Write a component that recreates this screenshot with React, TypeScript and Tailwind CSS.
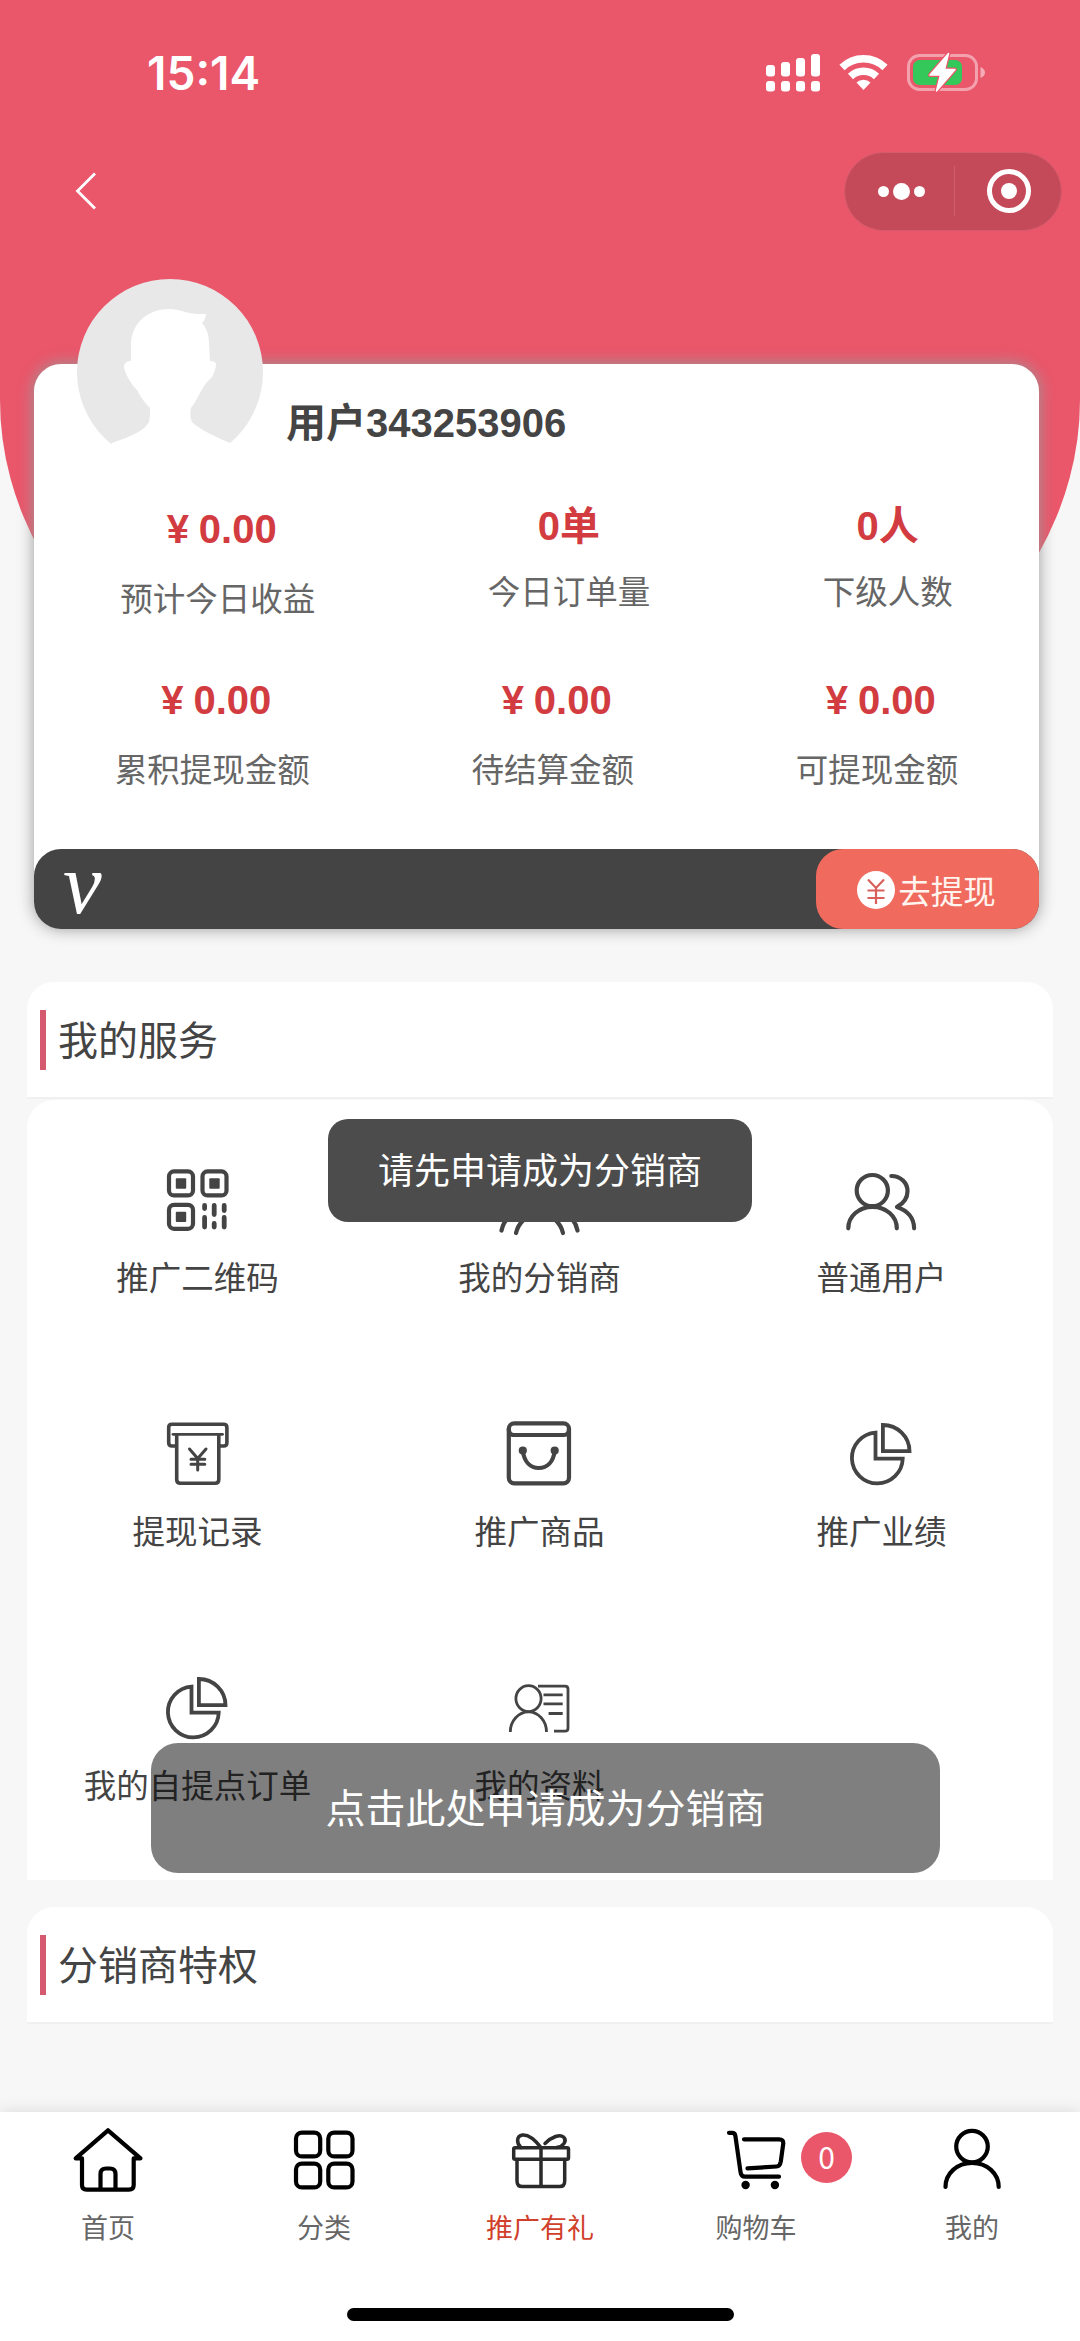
import { ReactNode } from 'react';

interface StatProps {
  label: string;
  value: string;
  money?: boolean;
}

interface ServiceItem {
  label: string;
  icon: ReactNode;
}

interface TabItem {
  label: string;
  icon: ReactNode;
  active?: boolean;
  badge?: number;
}

const Icon = ({ children, width = 4.2 }: { children: ReactNode; width?: number }) => (
  <svg
    viewBox="0 0 72 72"
    className="block w-[72px] h-[72px] overflow-visible"
    fill="none"
    stroke="currentColor"
    strokeWidth={width}
    strokeLinecap="round"
    strokeLinejoin="round"
  >
    {children}
  </svg>
);

const PieIcon = () => (
  <Icon width={3.8}>
    <g strokeLinejoin="miter">
      <path d="M29.5 14.6V40.7H56.7A25.4 25.4 0 1 1 29.5 14.6Z" />
      <path d="M36.9 7V33.2H63.5A26.6 26.4 0 0 0 36.9 7Z" />
    </g>
  </Icon>
);

const services: ServiceItem[] = [
  {
    label: '推广二维码',
    icon: (
      <Icon>
        <rect x="7" y="7.4" width="24" height="24" rx="5" />
        <rect x="40.5" y="7.4" width="24" height="24" rx="5" />
        <rect x="7" y="40.8" width="24" height="24" rx="5" />
        <g fill="currentColor" stroke="none">
          <rect x="13.8" y="14.3" width="10.4" height="10.4" rx="1" />
          <rect x="47.3" y="14.3" width="10.4" height="10.4" rx="1" />
          <rect x="13.8" y="47.7" width="10.4" height="10.4" rx="1" />
        </g>
        <path
          strokeWidth="4.8"
          d="M42.6 41.4V44.6M42.6 53.5V63M52.2 41.4V50.6M52.2 59.5V63M62.2 41.4V46.6M62.2 53.5V63"
        />
      </Icon>
    ),
  },
  {
    label: '我的分销商',
    icon: (
      <Icon>
        <circle cx="35.5" cy="30" r="16" />
        <path d="M12 69C14 60 23 49 35.5 49S57 60 59 69" />
        <path d="M-2.5 66.5C-1 59 4 52 12 49M73.5 66.5C72 59 67 52 59 49" />
      </Icon>
    ),
  },
  {
    label: '普通用户',
    icon: (
      <Icon>
        <circle cx="26.3" cy="26.6" r="15.6" />
        <path d="M2.3 64.3C2.3 52 13 42.9 26.5 42.9S50.8 52 50.8 64.3" />
        <path d="M45.3 12C55 12 61.5 19 61.5 27.2C61.5 34 57 39.7 51 42.9C61.5 46.5 68.1 54 68.1 64.3" />
      </Icon>
    ),
  },
  {
    label: '提现记录',
    icon: (
      <Icon width={3.6}>
        <path d="M13.5 28H10Q6.7 28 6.7 24.7V9.5Q6.7 6.3 10 6.3H61.6Q64.9 6.3 64.9 9.5V24.7Q64.9 28 61.6 28H58" />
        <path d="M11 16.3H60.5" strokeWidth="2.8" />
        <path d="M14.7 17V61.5Q14.7 65.3 18.5 65.3H53Q56.8 65.3 56.8 61.5V17" />
        <path strokeWidth="3" d="M27.5 31L35.7 40.5L44 31M35.7 40.5V52M29 41.3H42.8M29 46.2H42.8" />
      </Icon>
    ),
  },
  {
    label: '推广商品',
    icon: (
      <Icon>
        <rect x="4.8" y="5.3" width="60.2" height="60" rx="5.5" />
        <path d="M4.8 11Q4.8 17 10 17H60Q65 17 65 11" />
        <path d="M18.8 33C20.3 44 26.5 50 34.8 50S49.3 44 50.7 33" />
        <circle cx="18.8" cy="32.5" r="2" />
        <circle cx="50.7" cy="32.5" r="2" />
      </Icon>
    ),
  },
  { label: '推广业绩', icon: <PieIcon /> },
  { label: '我的自提点订单', icon: <PieIcon /> },
  {
    label: '我的资料',
    icon: (
      <Icon width={2.8}>
        <g strokeLinecap="butt">
          <ellipse cx="24.5" cy="26.6" rx="12.6" ry="13" />
          <path d="M6.3 60C6.3 49 14.5 39.8 24.5 39.8S42.5 49 42.5 60" />
          <path d="M34 14.2H61Q64 14.2 64 17.2V56.2Q64 59.2 61 59.2H50" />
          <path d="M39.5 22.8H58.7M39.5 31.8H58.7M44.6 41.5H58.7" />
        </g>
      </Icon>
    ),
  },
];

const tabs: TabItem[] = [
  {
    label: '首页',
    icon: (
      <Icon>
        <path d="M36 6.3L3.7 34.3H10V61Q10 65.6 14.6 65.6H57Q61.7 65.6 61.7 61V34.3H68.5Z" />
        <path d="M28.5 65V50Q28.5 44.5 34 44.5H38Q43.5 44.5 43.5 50V65" />
      </Icon>
    ),
  },
  {
    label: '分类',
    icon: (
      <Icon>
        <rect x="8" y="8.6" width="24.2" height="23.8" rx="6" />
        <rect x="40.3" y="8.6" width="24.2" height="23.8" rx="6" />
        <rect x="8" y="39.6" width="24.2" height="23.8" rx="6" />
        <rect x="40.3" y="39.6" width="24.2" height="23.8" rx="6" />
      </Icon>
    ),
  },
  {
    label: '推广有礼',
    active: true,
    icon: (
      <Icon width={3.5}>
        <rect x="9.7" y="23.7" width="54.8" height="11.5" rx="1.5" />
        <path d="M13 35.5V57Q13 62.6 18.5 62.6H55.5Q60.7 62.6 60.7 57V35.5M37 24V62" />
        <path d="M37 23.5C30 14.5 23 10.5 18.5 11C12.5 12 12 19 17 23.5M41 19.5C48 12.5 56 10 59.5 13C63.5 17 59.5 22.5 52.5 23.5" />
      </Icon>
    ),
  },
  {
    label: '购物车',
    badge: 0,
    icon: (
      <Icon>
        <path d="M9 8.8H12Q15 8.8 15.4 12L20.6 48.5Q21.2 52.7 25 52.7H59" />
        <path d="M24 15.3H59Q63.8 15.3 63.2 20L60.8 37.5Q60 42.2 56.5 42.5L27.5 44.4" />
        <circle cx="25.6" cy="61" r="4.2" fill="currentColor" stroke="none" />
        <circle cx="54.9" cy="61" r="4.2" fill="currentColor" stroke="none" />
      </Icon>
    ),
  },
  {
    label: '我的',
    icon: (
      <Icon>
        <circle cx="36" cy="22.6" r="15.8" />
        <path d="M9.5 63C9.5 49.5 21 38.8 36 38.8S62.7 49.5 62.7 63" />
      </Icon>
    ),
  },
];

const StatusBar = () => (
  <div className="flex justify-between items-center h-[146px] pl-[147px] pr-[94px] text-white">
    <span className="pt-px font-['Inter',sans-serif] font-semibold text-[46px]">15:14</span>
    <svg viewBox="767 50 220 46" className="block w-[220px] h-[46px]" fill="#fff">
      <rect x="767" y="65" width="9" height="11.5" rx="3" />
      <rect x="782" y="62" width="9" height="14.5" rx="3" />
      <rect x="797" y="58" width="9" height="18.5" rx="3" />
      <rect x="812" y="54" width="9" height="22.5" rx="3" />
      <rect x="767" y="81" width="9" height="10.5" rx="3" />
      <rect x="782" y="81" width="9" height="10.5" rx="3" />
      <rect x="797" y="81" width="9" height="10.5" rx="3" />
      <rect x="812" y="81" width="9" height="10.5" rx="3" />
      <g fill="none" stroke="#fff" strokeWidth="7.5">
        <path d="M843 67.5A31 31 0 0 1 886 67.5" />
        <path d="M851.5 76.5A19 19 0 0 1 877.5 76.5" />
      </g>
      <path d="M864.5 90L857.5 82.5A10 10 0 0 1 871.5 82.5Z" />
      <rect x="909.5" y="55.5" width="68" height="34" rx="11" fill="none" stroke="#fff" strokeOpacity="0.45" strokeWidth="3" />
      <path d="M981.5 67Q986 69 986 72.5T981.5 78Z" fillOpacity="0.5" />
      <rect x="914" y="60" width="49" height="25" rx="6.5" fill="#34c759" />
      <path
        d="M949.5 53.5L931 75H941.5L937.5 91L956 69.5H945.5Z"
        stroke="#ea566a"
        strokeWidth="4"
        strokeLinejoin="round"
        paintOrder="stroke"
      />
      <path d="M949.5 53.5L931 75H941.5L937.5 91L956 69.5H945.5Z" stroke="#fff" strokeWidth="1.5" strokeLinejoin="round" />
    </svg>
  </div>
);

const NavBar = () => (
  <div className="flex justify-between items-center h-[90px] pl-[75px] pr-[18px]">
    <svg viewBox="0 0 22 38" className="w-[22px] h-[38px]" fill="none" stroke="#fff" strokeWidth="2.8">
      <path d="M20 1.5L2.5 19L20 36.5" />
    </svg>
    <div className="flex items-center w-[218px] h-[79px] rounded-full bg-[#c44a5a] border border-[#d45c6c]">
      <div className="flex-1 flex justify-center items-center gap-1 pl-1">
        <span className="w-[11px] h-[11px] rounded-full bg-white" />
        <span className="w-[17px] h-[17px] rounded-full bg-white" />
        <span className="w-[11px] h-[11px] rounded-full bg-white" />
      </div>
      <div className="w-px h-[50px] bg-[#d0606f]" />
      <div className="flex-1 flex justify-center items-center pl-0.5">
        <div className="flex justify-center items-center w-11 h-11 rounded-full border-[5px] border-white">
          <span className="w-4 h-4 rounded-full bg-white" />
        </div>
      </div>
    </div>
  </div>
);

const Avatar = () => (
  <svg viewBox="77 279 186 186" className="absolute left-[43px] top-[-85px] w-[186px] h-[186px]">
    <circle cx="170" cy="372" r="93" fill="#e8e8e8" />
    <path
      d="M170 309C180 309 187 315 206 314C206 318 204 321 202 323C207 329 209 335 209 344L210 361C214 361 217 363 216 366C215 370 214 374 212 377C208 381 206 382 200 393C197 399 194 404 191 408C190 413 190 418 192 422C200 430 216 437 230 443L240 470H100L112 443C126 438 144 432 149 422C150 418 150 413 150 408C146 404 141 398 137 390C130 383 125 373 124 367C124 363 127 361 131 361L131 342C133 322 148 309 170 309Z"
      fill="#fff"
    />
  </svg>
);

const Stat = ({ label, value, money }: StatProps) => (
  <div className="flex flex-col items-center">
    {money ? (
      <div className="flex text-[40px] leading-[59px] font-bold text-[#d23c41]">
        <span className="w-10 pr-0.5 text-center">¥</span>
        <span>{value}</span>
      </div>
    ) : (
      <div className="text-[40px] leading-[52px] font-bold text-[#d23c41]">{value}</div>
    )}
    <div className="mt-[18px] text-[32.5px] leading-[46px] text-[#666]">{label}</div>
  </div>
);

const UserCard = () => (
  <div className="relative mt-32 ml-[34px] w-[1005px] h-[565px] flex flex-col rounded-[27px] bg-white shadow-[0_0_16px_#999]">
    <Avatar />
    <div className="pt-[29px] pl-[252px] text-[40px] leading-[60px] font-bold text-[#444]">用户343253906</div>
    <div className="flex justify-around items-start mt-[47px] h-[171px]">
      <Stat label="预计今日收益" value="0.00" money />
      <Stat label="今日订单量" value="0单" />
      <Stat label="下级人数" value="0人" />
    </div>
    <div className="flex justify-around items-start">
      <Stat label="累积提现金额" value="0.00" money />
      <Stat label="待结算金额" value="0.00" money />
      <Stat label="可提现金额" value="0.00" money />
    </div>
    <div className="mt-auto flex justify-between items-center h-20 rounded-[27px] bg-[#444]">
      <span className="pl-[29px] pb-[11px] font-['Liberation_Serif',serif] italic text-[87px] leading-[66px] text-white">v</span>
      <button className="flex justify-center items-center gap-[3px] w-[223px] h-20 pt-0.5 pr-0.5 rounded-[27px] bg-[#f06b5e] text-[32.5px] text-[#fff4ee]">
        <svg viewBox="0 0 38 38" className="w-[38px] h-[38px]">
          <circle cx="19" cy="19" r="19" fill="#fff" />
          <path d="M11 8.5L19 17L27 8.5M19 17V33M10.5 19.5H27.5M10.5 27H27.5" fill="none" stroke="#d9605a" strokeWidth="2.2" />
        </svg>
        <span className="pt-[7px]">去提现</span>
      </button>
    </div>
  </div>
);

const SectionTitle = ({ title }: { title: string }) => (
  <div className="flex items-center h-[117px] pl-[13px] rounded-t-[27px] bg-white border-b-2 border-[#f0f0f0]">
    <span className="w-[6px] h-[60px] bg-[#d55a70]" />
    <span className="pl-[12px] pt-[3px] text-[40px] leading-[60px] text-[#444]">{title}</span>
  </div>
);

const TabBar = () => (
  <div className="h-[229px] bg-white shadow-[0_0_16px_rgba(0,0,0,0.12)]">
    <div className="grid grid-cols-5 h-[196px] pt-3">
      {tabs.map((tab) => (
        <div key={tab.label} className="relative flex flex-col items-center">
          <div className={tab.active ? 'text-[#2b2b2b]' : 'text-black'}>{tab.icon}</div>
          <div className={`mt-[13px] text-[27px] leading-[40px] ${tab.active ? 'text-[#d0402b]' : 'text-[#666]'}`}>
            {tab.label}
          </div>
          {tab.badge !== undefined && (
            <span className="absolute left-[153px] top-2 w-[51px] h-[51px] rounded-full bg-[#ea566a] text-center font-['Noto_Sans_CJK_SC',sans-serif] text-[30px] leading-[48px] text-white">
              {tab.badge}
            </span>
          )}
        </div>
      ))}
    </div>
    <div className="mx-auto w-[387px] h-[13px] rounded-full bg-black" />
  </div>
);

export default function App() {
  return (
    <div className="relative isolate w-[1080px] h-[2341px] flex flex-col overflow-hidden bg-[#f7f7f7] font-['Liberation_Sans','Noto_Sans_CJK_SC',sans-serif]">
      {/* Curved header backdrop */}
      <div className="absolute -z-10 inset-x-0 top-0 h-[800px] rounded-b-[50%] bg-[#ea566a]" />
      <StatusBar />
      <NavBar />
      <UserCard />

      {/* Services */}
      <div className="mt-[53px] mx-[27px]">
        <SectionTitle title="我的服务" />
        <div className="mt-px h-[780px] pt-[10px] grid grid-cols-3 auto-rows-[254px] rounded-t-[27px] bg-white">
          {services.map((item) => (
            <div key={item.label} className="flex flex-col items-center pt-[54px] text-[#444]">
              {item.icon}
              <div className="mt-[20px] pr-px text-[32.5px] leading-[46px]">{item.label}</div>
            </div>
          ))}
        </div>
      </div>

      {/* Privileges */}
      <div className="mt-[27px] mx-[27px]">
        <SectionTitle title="分销商特权" />
      </div>

      <div className="mt-auto">
        <TabBar />
      </div>

      {/* Floating toasts */}
      <div className="absolute left-[328px] top-[1119px] w-[424px] h-[103px] pt-0.5 flex justify-center items-center rounded-[20px] bg-[#4c4c4c] text-[36px] text-white">
        请先申请成为分销商
      </div>
      <div className="absolute left-[151px] top-[1743px] w-[789px] h-[130px] pt-0.5 flex justify-center items-center rounded-[27px] bg-black/50 text-[40px] text-white">
        点击此处申请成为分销商
      </div>
    </div>
  );
}
